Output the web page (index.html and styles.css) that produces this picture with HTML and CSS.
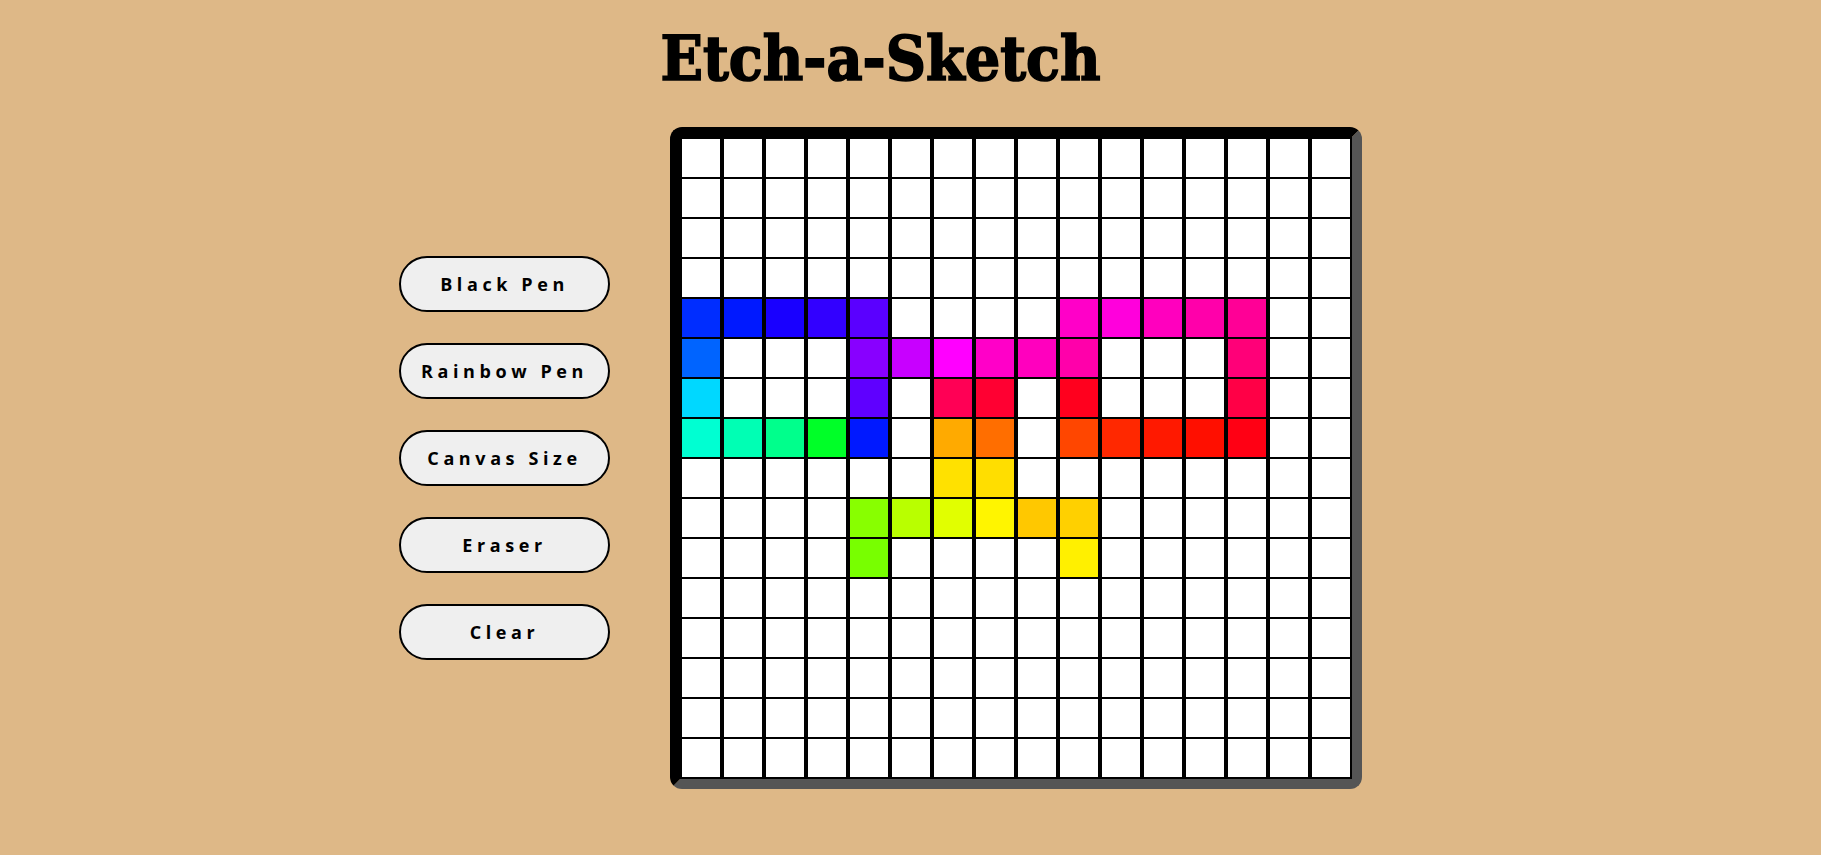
FILE: index.html
```html
<!DOCTYPE html>
<html lang="en">
<head>
<meta charset="utf-8">
<title>Etch-a-Sketch</title>
<link rel="stylesheet" href="styles.css">
</head>
<body>
<main class="app">
  <h1 class="title">Etch-a-Sketch</h1>
  <div class="workspace">
    <div class="controls">
      <button class="btn">Black Pen</button>
      <button class="btn">Rainbow Pen</button>
      <button class="btn">Canvas Size</button>
      <button class="btn">Eraser</button>
      <button class="btn">Clear</button>
    </div>
    <div class="board">
      <div class="grid" id="grid"></div>
    </div>
  </div>
</main>
<script src="script.js"></script>
</body>
</html>
```

FILE: styles.css
```css
* { box-sizing: border-box; }

body {
  margin: 0;
  background: #deb887;
  font-family: "Open Sans", "DejaVu Sans", sans-serif;
}

.app {
  display: flex;
  flex-direction: column;
  align-items: center;
  padding-right: 60px;
  padding-top: 20px;
}

.title {
  margin: 0;
  font-family: "DejaVu Serif", serif;
  font-stretch: condensed;
  font-weight: 700;
  font-size: 62px;
  line-height: 78px;
  color: #000;
  -webkit-text-stroke: 1.6px #000;
}

.workspace {
  display: flex;
  align-items: center;
  gap: 60px;
  margin-top: 29px;
}

.controls {
  display: flex;
  flex-direction: column;
  gap: 31px;
}

.btn {
  width: 211px;
  height: 56px;
  border: 2px solid #000;
  border-radius: 28px;
  background: #efefef;
  color: #000;
  font-family: "Open Sans", sans-serif;
  font-weight: 700;
  font-size: 18px;
  letter-spacing: 4.6px;
  padding: 0;
  cursor: pointer;
}

.board {
  width: 692px;
  height: 662px;
  border: 10px solid;
  border-color: #000 #555 #555 #000;
  border-radius: 12px;
}

.grid {
  width: 672px;
  height: 642px;
  background: #000;
  padding: 2px;
  display: grid;
  grid-template-columns: repeat(16, 38px);
  grid-template-rows: repeat(16, 38px);
  column-gap: 4px;
  row-gap: 2px;
}

.cell {
  background: #fff;
}
```

FILE: script.js
```js
const painted = {
  "4,0": "#002dff", "4,1": "#0019ff", "4,2": "#1900ff", "4,3": "#3200ff", "4,4": "#5a00ff",
  "4,9": "#ff00c8", "4,10": "#ff00dc", "4,11": "#ff00be", "4,12": "#ff00aa", "4,13": "#ff0096",
  "5,0": "#0064ff", "5,4": "#8800ff", "5,5": "#c800ff", "5,6": "#ff00ff", "5,7": "#ff00c8",
  "5,8": "#ff00be", "5,9": "#ff00aa", "5,13": "#ff0078",
  "6,0": "#00d8ff", "6,4": "#5f00ff", "6,6": "#ff0055", "6,7": "#ff0032", "6,9": "#ff001e",
  "6,13": "#ff0046",
  "7,0": "#00ffd2", "7,1": "#00ffb4", "7,2": "#00ff8c", "7,3": "#00ff28", "7,4": "#0019ff",
  "7,6": "#ffaa00", "7,7": "#ff6e00", "7,9": "#ff4600", "7,10": "#ff2800", "7,11": "#ff1900",
  "7,12": "#ff0f00", "7,13": "#ff0014",
  "8,6": "#ffe100", "8,7": "#ffde00",
  "9,4": "#88ff00", "9,5": "#b9ff00", "9,6": "#e1ff00", "9,7": "#fff500", "9,8": "#ffc800",
  "9,9": "#ffd000",
  "10,4": "#78ff00", "10,9": "#fff000"
};
const grid = document.getElementById("grid");
for (let r = 0; r < 16; r++) {
  for (let c = 0; c < 16; c++) {
    const cell = document.createElement("div");
    cell.className = "cell";
    const color = painted[r + "," + c];
    if (color) cell.style.backgroundColor = color;
    grid.appendChild(cell);
  }
}
```
